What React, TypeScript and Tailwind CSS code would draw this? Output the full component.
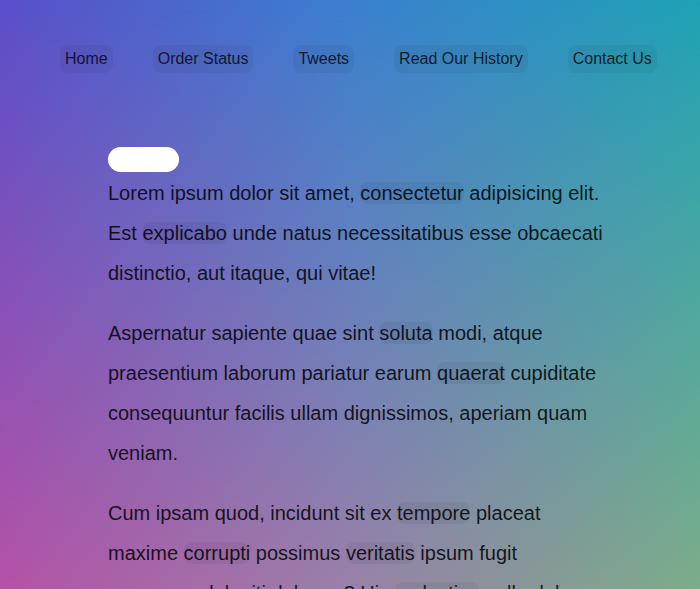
import React from "react";

const navItems = ["Home", "Order Status", "Tweets", "Read Our History", "Contact Us"];

function H({ children }: { children: React.ReactNode }) {
  return <span className="rounded-lg bg-black/[0.05]">{children}</span>;
}

export default function App() {
  return (
    <div
      className="relative h-[589px] w-full overflow-hidden bg-[linear-gradient(to_right,#5a4fca,#3a80d0_50%,#1fa2b6)]"
      style={{ fontFamily: '"Liberation Sans", Arial, sans-serif' }}
    >
      <div className="pointer-events-none absolute inset-0 bg-[linear-gradient(to_right,#b552a6,#9a80a8_50%,#7cad88)] [mask-image:linear-gradient(to_bottom,transparent,black)]" />
      <div className="relative">
        <nav className="flex gap-[40px] pl-[60px] pt-[45px]">
          {navItems.map((n) => (
            <a
              key={n}
              className="rounded-lg bg-black/[0.05] px-[5px] py-[5px] text-[16px] leading-[18px] text-black/80"
            >
              {n}
            </a>
          ))}
        </nav>
        <main className="ml-[108px] mt-[74px] w-[500px] text-[20px] leading-[40px] text-black/85">
          <div className="h-[25px] w-[71px] rounded-full bg-white" />
          <p className="mt-[1px]">
            Lorem ipsum dolor sit amet, <H>consectetur</H> adipisicing elit. Est <H>explicabo</H> unde natus
            necessitatibus esse obcaecati distinctio, aut itaque, qui vitae!
          </p>
          <p className="mt-[20px]">
            Aspernatur sapiente quae sint <H>soluta</H> modi, atque praesentium laborum pariatur earum{" "}
            <H>quaerat</H> cupiditate consequuntur facilis ullam dignissimos, aperiam quam veniam.
          </p>
          <p className="mt-[20px]">
            Cum ipsam quod, incidunt sit ex <H>tempore</H> placeat maxime <H>corrupti</H> possimus{" "}
            <H>veritatis</H> ipsum fugit numquam deleniti dolorem? Hic <H>molestias</H> nulla dolorem
            eveniet.
          </p>
        </main>
      </div>
    </div>
  );
}
